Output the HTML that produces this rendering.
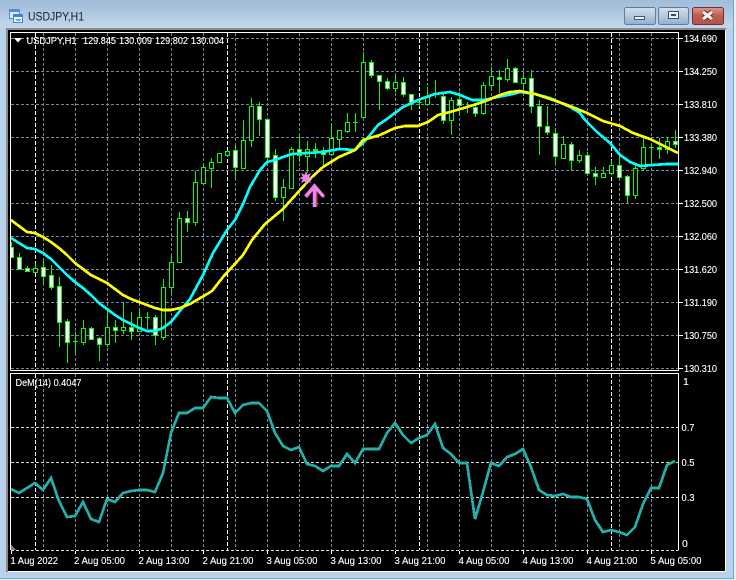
<!DOCTYPE html>
<html><head><meta charset="utf-8"><title>USDJPY,H1</title>
<style>
html,body{margin:0;padding:0;width:736px;height:580px;overflow:hidden;background:#b9d1ea}
svg{display:block}
text{font-family:"Liberation Sans",sans-serif;font-size:10.5px;fill:#fff;stroke:#fff;stroke-width:.12px}
.c{shape-rendering:crispEdges}
</style></head><body>
<svg width="736" height="580" viewBox="0 0 736 580" xmlns="http://www.w3.org/2000/svg">
<defs>
<linearGradient id="tb" x1="0" y1="0" x2="0" y2="1"><stop offset="0" stop-color="#9fbcd9"/><stop offset="1" stop-color="#c3d7ea"/></linearGradient>
<linearGradient id="bt" x1="0" y1="0" x2="0" y2="1"><stop offset="0" stop-color="#d3e0ee"/><stop offset=".5" stop-color="#b4c9df"/><stop offset="1" stop-color="#8fb0d0"/></linearGradient>
<linearGradient id="cl" x1="0" y1="0" x2="0" y2="1"><stop offset="0" stop-color="#d99a8c"/><stop offset=".5" stop-color="#c25a4c"/><stop offset="1" stop-color="#b0564a"/></linearGradient>
<clipPath id="m"><rect x="11" y="33" width="667" height="337"/></clipPath>
<clipPath id="s"><rect x="11" y="374" width="667" height="176"/></clipPath>
</defs>
<!-- window frame -->
<rect width="736" height="580" fill="#b9d1ea"/>
<rect width="736" height="28" fill="url(#tb)"/>
<g class="c">
<rect x="733" y="0" width="1" height="579" fill="#5fb0cf"/>
<rect x="0" y="578" width="734" height="1" fill="#5fb0cf"/>
<rect x="734" y="0" width="2" height="580" fill="#e8f0f6"/>
<rect x="0" y="579" width="736" height="1" fill="#e8f0f6"/>
<rect x="6" y="28" width="720" height="544" fill="#fff"/>
<rect x="6" y="28" width="720" height="2" fill="#8a8a8a"/>
<rect x="6" y="28" width="2" height="544" fill="#8a8a8a"/>
<rect x="8" y="30" width="717" height="541" fill="#000"/>
</g>
<!-- title icon -->
<g class="c">
<rect x="9.500" y="9.500" width="10" height="9" fill="#dceaf6" stroke="#4d8fd0"/>
<rect x="10" y="10" width="9" height="2" fill="#4d8fd0"/>
<rect x="13.500" y="14.500" width="9" height="8" fill="#eef5fb" stroke="#3f86cc"/>
<rect x="14" y="15" width="8" height="2" fill="#3f86cc"/>
<path d="M15.500 19.500h1l1 1 1-1 1 1 1-1" fill="none" stroke="#3f86cc"/>
</g>
<text x="28" y="20.500" style="font-size:12px;fill:#14202e;stroke:none" textLength="56" lengthAdjust="spacingAndGlyphs">USDJPY,H1</text>
<!-- buttons -->
<rect x="624.500" y="7.500" width="31" height="17" rx="2" fill="url(#bt)" stroke="#5f7d9c"/>
<rect x="634.500" y="16.500" width="10" height="3" fill="#f2f6fa" stroke="#45566a" class="c"/>
<rect x="658.500" y="7.500" width="30" height="17" rx="2" fill="url(#bt)" stroke="#5f7d9c"/>
<rect x="668.500" y="11.500" width="10" height="7" fill="none" stroke="#3c4c60" class="c"/>
<rect x="669.500" y="12.500" width="8" height="5" fill="#dfe8f1" stroke="#fff" class="c"/>
<rect x="671.500" y="14.500" width="4" height="1" fill="none" stroke="#3c4c60" class="c"/>
<rect x="692.500" y="7.500" width="31" height="17" rx="2" fill="url(#cl)" stroke="#6f2f3a"/>
<path d="M703 12l9 7M712 12l-9 7" stroke="#5c2a2a" stroke-width="5" fill="none"/>
<path d="M703 12l9 7M712 12l-9 7" stroke="#f4f0ee" stroke-width="3.200" fill="none"/>
<!-- grid main -->
<g clip-path="url(#m)" class="c" fill="none">
<path stroke="#778899" stroke-dasharray="3 2" d="M11 38.500H678M11 71.500H678M11 104.500H678M11 137.500H678M11 170.500H678M11 203.500H678M11 236.500H678M11 269.500H678M11 302.500H678M11 335.500H678M11 368.500H678"/>
<path stroke="#778899" stroke-dasharray="3 2" d="M43.500 33V370M75.500 33V370M107.500 33V370M139.500 33V370M171.500 33V370M203.500 33V370M235.500 33V370M267.500 33V370M299.500 33V370M331.500 33V370M363.500 33V370M395.500 33V370M427.500 33V370M459.500 33V370M491.500 33V370M523.500 33V370M555.500 33V370M587.500 33V370M619.500 33V370M651.500 33V370"/>
<path stroke="#fff" stroke-dasharray="4 2" d="M35.500 33V370M227.500 33V370M419.500 33V370M611.500 33V370"/>
<!-- wicks -->
<path stroke="#00ff00" d="M11.500 242V258M19.500 253V270M27.500 266V272M35.500 263V272M43.500 260V283M51.500 265V290M59.500 277V347M67.500 319V363M75.500 332V353M83.500 320V345M91.500 327V340M99.500 337V361M107.500 310V347M115.500 320V343M123.500 303V334M131.500 312V340M139.500 310V332M147.500 312V329M155.500 315V345M163.500 279V340M171.500 255V294M179.500 212V263M187.500 211V232M195.500 171V226M203.500 164V184M211.500 158V188M219.500 153V162M227.500 150V157M235.500 145V178M243.500 120V168M251.500 98V147M259.500 102V136M267.500 119V162M275.500 149V201M283.500 179V221M291.500 147V188M299.500 135V162M307.500 141V173M315.500 143V158M323.500 147V167M331.500 123V155M339.500 130V148M347.500 113V133M355.500 113V132M363.500 52V118M371.500 60V78M379.500 75V110M387.500 78V90M395.500 75V92M403.500 77V97M411.500 94V110M419.500 102V107M427.500 87V105M435.500 80V98M443.500 92V124M451.500 97V135M459.500 92V115M467.500 102V113M475.500 105V117M483.500 82V115M491.500 67V91M499.500 70V93M507.500 59V82M515.500 67V83M523.500 72V90M531.500 70V113M539.500 100V155M547.500 106V135M555.500 128V163M563.500 136V159M571.500 142V171M579.500 150V163M587.500 152V175M595.500 167V185M603.500 167V178M611.500 160V175M619.500 155V177M627.500 175V203M635.500 165V199M643.500 138V171M651.500 145V165M659.500 138V159M667.500 137V154M675.500 130V148"/>
<!-- dojis -->
<path stroke="#00ff00" d="M73 341.500h5M145 317.500h5M353 122.500h5M417 102.500h5M649 147.500h5"/>
<path fill="#00ff00" stroke="#00ff00" d="M313.500 149.500h4v2h-4z"/>
<!-- bull (black) bodies -->
<path fill="#000" stroke="#00ff00" d="M33.500 268.500h4v4h-4zM81.500 328.500h4v14h-4zM105.500 327.500h4v17h-4zM121.500 327.500h4v3h-4zM137.500 317.500h4v14h-4zM161.500 287.500h4v50h-4zM169.500 262.500h4v25h-4zM177.500 218.500h4v44h-4zM193.500 182.500h4v40h-4zM201.500 167.500h4v16h-4zM209.500 162.500h4v6h-4zM217.500 153.500h4v9h-4zM225.500 151.500h4v4h-4zM241.500 140.500h4v28h-4zM249.500 106.500h4v34h-4zM281.500 187.500h4v10h-4zM289.500 149.500h4v39h-4zM305.500 149.500h4v7h-4zM329.500 138.500h4v16h-4zM337.500 130.500h4v9h-4zM345.500 122.500h4v9h-4zM361.500 62.500h4v55h-4zM393.500 82.500h4v6h-4zM425.500 96.500h4v8h-4zM449.500 100.500h4v20h-4zM481.500 85.500h4v28h-4zM489.500 76.500h4v9h-4zM505.500 68.500h4v11h-4zM521.500 78.500h4v5h-4zM561.500 144.500h4v14h-4zM577.500 155.500h4v5h-4zM601.500 173.500h4v4h-4zM609.500 165.500h4v8h-4zM633.500 168.500h4v27h-4zM641.500 147.500h4v21h-4zM665.500 141.500h4v8h-4z"/>
<!-- bear (white) bodies -->
<path fill="#fff" stroke="#00ff00" d="M9.500 247.500h4v10h-4zM17.500 257.500h4v12h-4zM25.500 268.500h4v3h-4zM41.500 267.500h4v9h-4zM49.500 275.500h4v12h-4zM57.500 286.500h4v36h-4zM65.500 321.500h4v21h-4zM89.500 328.500h4v11h-4zM97.500 338.500h4v6h-4zM113.500 327.500h4v3h-4zM129.500 327.500h4v4h-4zM153.500 317.500h4v18h-4zM185.500 218.500h4v4h-4zM233.500 150.500h4v17h-4zM257.500 106.500h4v13h-4zM265.500 119.500h4v38h-4zM273.500 155.500h4v42h-4zM297.500 149.500h4v6h-4zM321.500 150.500h4v4h-4zM369.500 62.500h4v13h-4zM377.500 75.500h4v6h-4zM385.500 81.500h4v7h-4zM401.500 82.500h4v12h-4zM409.500 94.500h4v9h-4zM441.500 96.500h4v24h-4zM457.500 99.500h4v6h-4zM473.500 107.500h4v6h-4zM497.500 77.500h4v2h-4zM513.500 68.500h4v14h-4zM529.500 78.500h4v28h-4zM537.500 106.500h4v20h-4zM545.500 126.500h4v6h-4zM553.500 133.500h4v23h-4zM569.500 144.500h4v16h-4zM585.500 155.500h4v18h-4zM593.500 173.500h4v3h-4zM617.500 165.500h4v12h-4zM625.500 176.500h4v19h-4zM657.500 147.500h4v2h-4zM673.500 141.500h4v3h-4z"/>
<!-- MAs -->
<polyline fill="none" stroke="#00ffff" stroke-width="2.700" points="11,238 19,243 27,248 35,249 43,253 51,259 59,267 67,275 75,282 83,288 91,295 99,303 107,309 115,315 123,320 131,324 139,328 147,331 155,331 163,328 171,322 179,312 190,299 203,275 213,253 227,230 235,220 243,204 250,187 260,170 267,162 275,160 283,157 292,154 307,153 323,152 339,149 355,150 363,143 370,135 378,125 387,119 395,113 403,107 418,100 435,94 450,92 460,95 472,100 483,100 498,97 513,94 520,92 535,94 550,98 570,107 580,113 585,120 597,132 610,143 620,155 630,162 640,166 653,165 667,164 678,164"/>
<polyline fill="none" stroke="#ffff00" stroke-width="2.700" points="11,220 19,226 27,232 35,233 43,237 51,242 59,248 67,255 75,263 83,269 91,275 99,279 107,283 115,289 123,295 131,299 139,302 147,305 155,308 163,310 171,310 180,308 190,304 202,297 212,291 223,277 233,266 243,255 252,240 265,224 283,209 300,190 312,177 323,167 339,157 355,150 363,140 380,135 395,128 405,126 418,126 428,122 438,115 450,112 467,107 483,102 500,95 510,92 520,91 535,94 553,100 570,106 587,113 603,121 620,126 633,133 650,139 678,153"/>
</g>
<!-- indicator panel -->
<g clip-path="url(#s)" class="c" fill="none">
<path stroke="#d8d8d8" stroke-dasharray="3 2" d="M11 427.500H678M11 462.500H678M11 497.500H678"/>
<path stroke="#778899" stroke-dasharray="3 2" d="M43.500 374V550M75.500 374V550M107.500 374V550M139.500 374V550M171.500 374V550M203.500 374V550M235.500 374V550M267.500 374V550M299.500 374V550M331.500 374V550M363.500 374V550M395.500 374V550M427.500 374V550M459.500 374V550M491.500 374V550M523.500 374V550M555.500 374V550M587.500 374V550M619.500 374V550M651.500 374V550"/>
<path stroke="#fff" stroke-dasharray="4 2" d="M35.500 374V550M227.500 374V550M419.500 374V550M611.500 374V550"/>
<polyline stroke="#20b2aa" stroke-width="2.700" points="11,489 19,493 27,488 35,483 43,490 51,478 59,501 67,517 75,516 83,502 91,519 99,522 107,499 115,502 123,493 131,491 139,490 147,490 155,492 163,473 171,433 179,413 187,413 195,408 203,408 211,397 219,398 227,398 235,413 243,405 251,403 259,403 267,411 275,433 283,446 291,450 299,447 307,464 315,466 323,471 331,466 339,466 347,454 355,463 363,449 371,449 379,449 387,433 395,423 403,435 411,443 419,438 427,435 435,424 443,448 451,454 459,463 467,463 475,519 483,492 491,463 499,466 507,457 515,454 523,449 531,467 539,490 547,495 555,496 563,494 571,497 579,497 587,499 595,520 603,532 611,530 619,532 627,535 635,527 643,504 651,488 659,488 667,465 675,461"/>
<path fill="#808080" stroke="none" d="M11 545l5 5h-5z"/>
</g>
<!-- frames -->
<g class="c" fill="none" stroke="#fff">
<path d="M10.500 370.500V32.500H678.500V370.500H10.500"/>
<path d="M10.500 550V373.500H678.500V550.500"/>
</g>
<path class="c" stroke="#e0e0e0" stroke-dasharray="3 2" d="M11 550.500H678"/>
<!-- ticks -->
<path class="c" stroke="#fff" d="M679 38.500h4M679 71.500h4M679 104.500h4M679 137.500h4M679 170.500h4M679 203.500h4M679 236.500h4M679 269.500h4M679 302.500h4M679 335.500h4M679 368.500h4M11.500 551v3M75.500 551v3M139.500 551v3M203.500 551v3M267.500 551v3M331.500 551v3M395.500 551v3M459.500 551v3M523.500 551v3M587.500 551v3M651.500 551v3"/>
<!-- signal marks -->
<polygon fill="#ee82ee" points="313,178 309.200,179.300 311,183 307.300,181.200 306,185 304.700,181.200 301,183 302.800,179.300 299,178 302.800,176.700 301,173 304.700,174.800 306,171 307.300,174.800 311,173 309.200,176.700"/>
<path d="M306.500 197.500L315 187l9.500 10.500M316.500 190v17" fill="none" stroke="#b03a48" stroke-width="2"/>
<path d="M305.500 196.500L314.500 186l9 10.500M314.500 189v18" fill="none" stroke="#ee82ee" stroke-width="3.500"/>
<!-- labels -->
<path d="M14 38h8l-4 4.500z" fill="#fff"/>
<g>
<text x="26.500" y="44" textLength="50" lengthAdjust="spacingAndGlyphs">USDJPY,H1</text>
<text x="83" y="44" textLength="33" lengthAdjust="spacingAndGlyphs">129.845</text>
<text x="119" y="44" textLength="33" lengthAdjust="spacingAndGlyphs">130.009</text>
<text x="155" y="44" textLength="33" lengthAdjust="spacingAndGlyphs">129.802</text>
<text x="191" y="44" textLength="33" lengthAdjust="spacingAndGlyphs">130.004</text>
<text x="15.500" y="386" textLength="66" lengthAdjust="spacingAndGlyphs">DeM(14) 0.4047</text>
<text x="684" y="42" textLength="33" lengthAdjust="spacingAndGlyphs">134.690</text>
<text x="684" y="75" textLength="33" lengthAdjust="spacingAndGlyphs">134.250</text>
<text x="684" y="108" textLength="33" lengthAdjust="spacingAndGlyphs">133.810</text>
<text x="684" y="141" textLength="33" lengthAdjust="spacingAndGlyphs">133.380</text>
<text x="684" y="174" textLength="33" lengthAdjust="spacingAndGlyphs">132.940</text>
<text x="684" y="207" textLength="33" lengthAdjust="spacingAndGlyphs">132.500</text>
<text x="684" y="240" textLength="33" lengthAdjust="spacingAndGlyphs">132.060</text>
<text x="684" y="273" textLength="33" lengthAdjust="spacingAndGlyphs">131.620</text>
<text x="684" y="306" textLength="33" lengthAdjust="spacingAndGlyphs">131.190</text>
<text x="684" y="339" textLength="33" lengthAdjust="spacingAndGlyphs">130.750</text>
<text x="684" y="372" textLength="33" lengthAdjust="spacingAndGlyphs">130.310</text>
<text x="683" y="385">1</text>
<text x="681.500" y="431" textLength="13" lengthAdjust="spacingAndGlyphs">0.7</text>
<text x="681.500" y="466" textLength="13" lengthAdjust="spacingAndGlyphs">0.5</text>
<text x="681.500" y="501" textLength="13" lengthAdjust="spacingAndGlyphs">0.3</text>
<text x="682" y="547">0</text>
<text x="10.500" y="564" textLength="47.500" lengthAdjust="spacingAndGlyphs">1 Aug 2022</text>
<text x="74" y="564" textLength="51" lengthAdjust="spacingAndGlyphs">2 Aug 05:00</text>
<text x="138.500" y="564" textLength="51" lengthAdjust="spacingAndGlyphs">2 Aug 13:00</text>
<text x="202.500" y="564" textLength="51" lengthAdjust="spacingAndGlyphs">2 Aug 21:00</text>
<text x="266.500" y="564" textLength="51" lengthAdjust="spacingAndGlyphs">3 Aug 05:00</text>
<text x="330.500" y="564" textLength="51" lengthAdjust="spacingAndGlyphs">3 Aug 13:00</text>
<text x="394.500" y="564" textLength="51" lengthAdjust="spacingAndGlyphs">3 Aug 21:00</text>
<text x="458.500" y="564" textLength="51" lengthAdjust="spacingAndGlyphs">4 Aug 05:00</text>
<text x="522.500" y="564" textLength="51" lengthAdjust="spacingAndGlyphs">4 Aug 13:00</text>
<text x="586.500" y="564" textLength="51" lengthAdjust="spacingAndGlyphs">4 Aug 21:00</text>
<text x="650.500" y="564" textLength="51" lengthAdjust="spacingAndGlyphs">5 Aug 05:00</text>
</g>
</svg>
</body></html>
